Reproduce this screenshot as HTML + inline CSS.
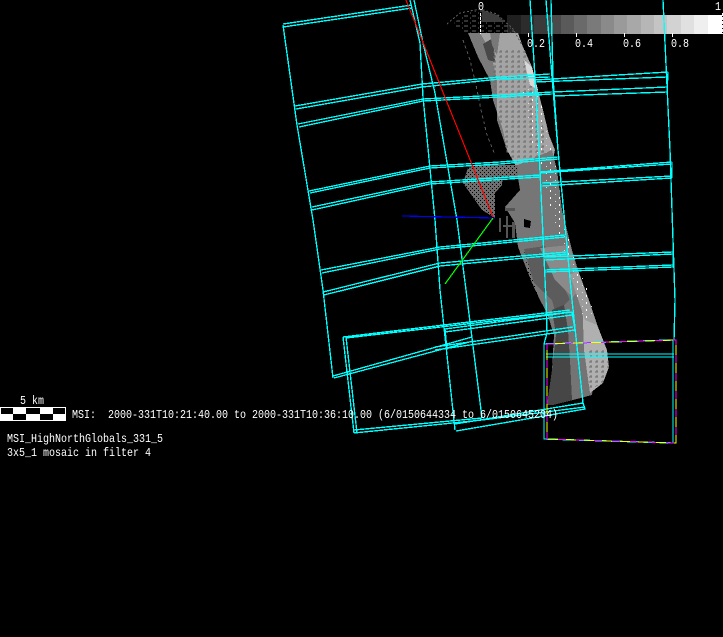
<!DOCTYPE html>
<html><head><meta charset="utf-8"><style>
html,body{margin:0;padding:0;background:#000;width:723px;height:637px;overflow:hidden}
svg{position:absolute;left:0;top:0}
.t{position:absolute;color:#fff;font:12px/12px "Liberation Mono",monospace;white-space:pre;transform:scaleX(.8333);transform-origin:0 0}
</style></head><body>
<svg width="723" height="637" viewBox="0 0 723 637" shape-rendering="crispEdges">
<defs>
<pattern id="m" width="6" height="5" patternUnits="userSpaceOnUse"><path d="M1 2h3M3 0v2" stroke="#6c6c6c" fill="none"/></pattern>
<pattern id="d" width="8" height="5" patternUnits="userSpaceOnUse"><path d="M0 1h4M6 3h1" stroke="#666" fill="none"/></pattern>
<pattern id="s" width="9" height="7" patternUnits="userSpaceOnUse"><rect x="1" y="1" width="1" height="2" fill="#fff"/><rect x="6" y="5" width="1" height="1" fill="#ddd"/></pattern>
<pattern id="k" width="4" height="4" patternUnits="userSpaceOnUse"><rect width="1" height="1" fill="#000"/><rect x="2" y="2" width="1" height="1" fill="#000"/></pattern>
</defs>
<!-- colour bar -->
<g>
<rect x="507" y="15" width="14" height="19" fill="#202020"/><rect x="521" y="15" width="13" height="19" fill="#2c2c2c"/><rect x="534" y="15" width="13" height="19" fill="#3a3a3a"/><rect x="547" y="15" width="14" height="19" fill="#4a4a4a"/><rect x="561" y="15" width="13" height="19" fill="#5a5a5a"/><rect x="574" y="15" width="13" height="19" fill="#6a6a6a"/><rect x="587" y="15" width="14" height="19" fill="#7a7a7a"/><rect x="601" y="15" width="13" height="19" fill="#8a8a8a"/><rect x="614" y="15" width="13" height="19" fill="#9a9a9a"/><rect x="627" y="15" width="14" height="19" fill="#a8a8a8"/><rect x="641" y="15" width="13" height="19" fill="#b6b6b6"/><rect x="654" y="15" width="13" height="19" fill="#c4c4c4"/><rect x="667" y="15" width="14" height="19" fill="#d2d2d2"/><rect x="681" y="15" width="13" height="19" fill="#e0e0e0"/><rect x="694" y="15" width="14" height="19" fill="#efefef"/><rect x="708" y="15" width="14" height="19" fill="#fff"/>
</g>
<!-- asteroid upper -->
<path d="M468 33H518L523 47 532 67 537 87 543 110 549 135 555 150 552 165 518 170 507 150 503 130 493 100 490 80 478 57Z" fill="#a4a4a4"/>
<path d="M468 33L480 33 490 50 497 80 497 120 507 150 503 130 493 100 490 80 478 57Z" fill="#7a7a7a"/>
<path d="M483 44L493 38 495 62 488 60Z" fill="#484848"/>
<path d="M490 33H500L497 55 492 45Z" fill="#787878"/>
<path d="M490 50H525L535 90 543 125 548 165 510 165 498 120Z" fill="url(#m)"/>
<path d="M524 60L532 67 538 90 530 85Z" fill="#d8d8d8"/>
<path d="M522 90L537 87 543 110 549 135 553 160 535 160 528 120Z" fill="url(#s)"/>
<path d="M462 14L480 10 497 15 513 30 518 33 468 33 452 26Z" fill="url(#d)"/>
<path d="M482 10L497 15 505 22 482 22Z" fill="#3c3c3c"/>
<path d="M447 24L460 13 480 9 497 14 513 29 522 45" fill="none" stroke="#5a5a5a" stroke-dasharray="2 2"/>
<path d="M463 40L470 60 476 85 481 110 487 135 495 155" fill="none" stroke="#5a5a5a" stroke-dasharray="3 3"/>
<!-- asteroid middle -->
<path d="M518 165L552 150 557 170 562 210 572 250 578 270 590 303 598 327 607 350 609 367 603 383 585 397 553 405 547 405 552 370 554 335 547 313 540 300 532 283 518 247 515 223 505 207 520 190 518 178Z" fill="#767676"/>
<path d="M468 168L480 165 518 165 518 178 503 178 502 185 495 193 495 218 482 210 463 183Z" fill="#6e6e6e"/>
<path d="M468 168L480 165 518 165 518 178 503 178 502 185 495 193 495 218 482 210 463 183Z" fill="url(#k)"/>
<path d="M524 219L531 221 530 228 524 227Z" fill="#000"/>
<path d="M499 218h2v14h-2zM505 208h10v3h-10zM506 216h2v22h-2zM512 222h3v16h-3zM503 225h10v2h-10z" fill="#555"/>
<path d="M524 249L545 246 570 300 560 330 552 300 534 283Z" fill="#5c5c5c"/>
<path d="M524 249L534 283 540 300 547 313 552 330 545 320 530 285Z" fill="url(#k)"/>
<path d="M540 248L570 245 585 300 575 300 555 280Z" fill="#8a8a8a"/>
<path d="M540 160L555 158 562 210 572 250 585 293 575 285 560 240 548 200Z" fill="url(#s)"/>
<!-- asteroid lower -->
<path d="M552 310L575 300 590 330 600 350 592 395 553 405 547 405 552 370 556 335Z" fill="#464646"/>
<path d="M564 305L578 292 590 325 592 395 572 400 570 360 568 330Z" fill="#747474"/>
<path d="M582 295L590 303 598 327 607 350 609 367 603 383 590 393 584 350Z" fill="#b0b0b0"/>
<path d="M570 275L578 270 590 303 597 325 585 320Z" fill="#9c9c9c"/>
<path d="M572 275L583 272 595 315 583 320Z" fill="url(#s)"/>
<path d="M586 350L607 350 609 367 603 383 590 390Z" fill="url(#m)"/>
<!-- cyan wireframe -->
<g fill="none" stroke="#0ff" stroke-width="1.35">
<path d="M283 24L412 5M283 27L412 8M283 25L297 125 313 220 323 290 333 378"/>
<path d="M414 0L423 43 435 93 457 220 466 290 482 418M410 0L420 43 423 97 435 220 440 290 455 430"/>
<path d="M295 106L422 84 500 77M296 109L422 87 500 79M298 124L423 99 500 95M299 127L423 101 500 97"/>
<path d="M500 77L550 74M500 79L550 77M500 95L552 92M500 97L552 94"/>
<path d="M535 80L668 72M535 82L667 77M553 92L667 87M553 96L667 92M668 72L667 92"/>
<path d="M309 191L430 166 500 162 558 157M310 193L430 168 500 164 558 159M312 207L430 182 540 175M312 210L430 184 540 177"/>
<path d="M540 172L672 162M540 173L672 164M542 183L672 176M542 186L672 178M672 162L672 178"/>
<path d="M321 270L440 247 565 235M322 273L440 249 565 237M323 292L440 263 567 252M324 295L440 266 567 254"/>
<path d="M545 257L673 252M545 260L673 254M545 270L673 265M545 272L673 267M673 252L673 267"/>
<path d="M333 376L472 337M334 378L473 341M435 347L573 327M435 350L575 330"/>
<path d="M445 329L572 312M445 332L572 315M445 329L447 350M572 312L575 330"/>
<path d="M343 337L570 310M346 338L570 312M343 337L354 433M346 337L357 433M354 433L482 420 585 407M354 430L482 418"/>
<path d="M456 431L585 409 583 403 455 424"/>
<path d="M530 0L535 77 539 150 546 300 547 333 544 344M546 0L552 77 558 150 572 300 583 403M551 0L553 77 558 150"/>
<path d="M663 0L670 150 675 300 674 340"/>
<path d="M544 344L673 340M544 344V439L673 443M673 340V443M546 354H674M546 357H674"/>
</g>
<!-- yellow/magenta frame -->
<path d="M547 344L676 340V443L547 439Z" fill="none" stroke="#ff0"/>
<path d="M547 344L676 340V443L547 439Z" fill="none" stroke="#f0f" stroke-dasharray="8 10"/>
<!-- axes -->
<path d="M406 0L493 217" stroke="#f00" fill="none" stroke-width="1.2"/>
<path d="M402 216L495 218" stroke="#00f" fill="none" stroke-width="1.2"/>
<path d="M493 218L445 284" stroke="#0f0" fill="none" stroke-width="1.2"/>
<!-- colour bar ticks -->
<path d="M480.500 13V34M722.500 13V34" stroke="#fff" stroke-dasharray="3 1" fill="none"/>
<path d="M528.500 33V37M576.500 33V37M624.500 33V37M672.500 33V37" stroke="#fff" fill="none"/>
<!-- scale bar -->
<rect x="0" y="407" width="66" height="14" fill="#fff"/>
<rect x="1" y="408" width="12" height="6" fill="#000"/><rect x="26" y="408" width="14" height="6" fill="#000"/><rect x="53" y="408" width="12" height="6" fill="#000"/>
<rect x="13" y="414" width="13" height="6" fill="#000"/><rect x="40" y="414" width="13" height="6" fill="#000"/>
</svg>
<div class="t" style="left:478px;top:1px">0</div>
<div class="t" style="left:715px;top:1px">1</div>
<div class="t" style="left:527px;top:38px">0.2</div>
<div class="t" style="left:575px;top:38px">0.4</div>
<div class="t" style="left:623px;top:38px">0.6</div>
<div class="t" style="left:671px;top:38px">0.8</div>
<div class="t" style="left:20px;top:395px">5 km</div>
<div class="t" style="left:72px;top:409px">MSI:  2000-331T10:21:40.00 to 2000-331T10:36:10.00 (6/0150644334 to 6/0150645204)</div>
<div class="t" style="left:7px;top:433px">MSI_HighNorthGlobals_331_5</div>
<div class="t" style="left:7px;top:447px">3x5_1 mosaic in filter 4</div>
</body></html>
